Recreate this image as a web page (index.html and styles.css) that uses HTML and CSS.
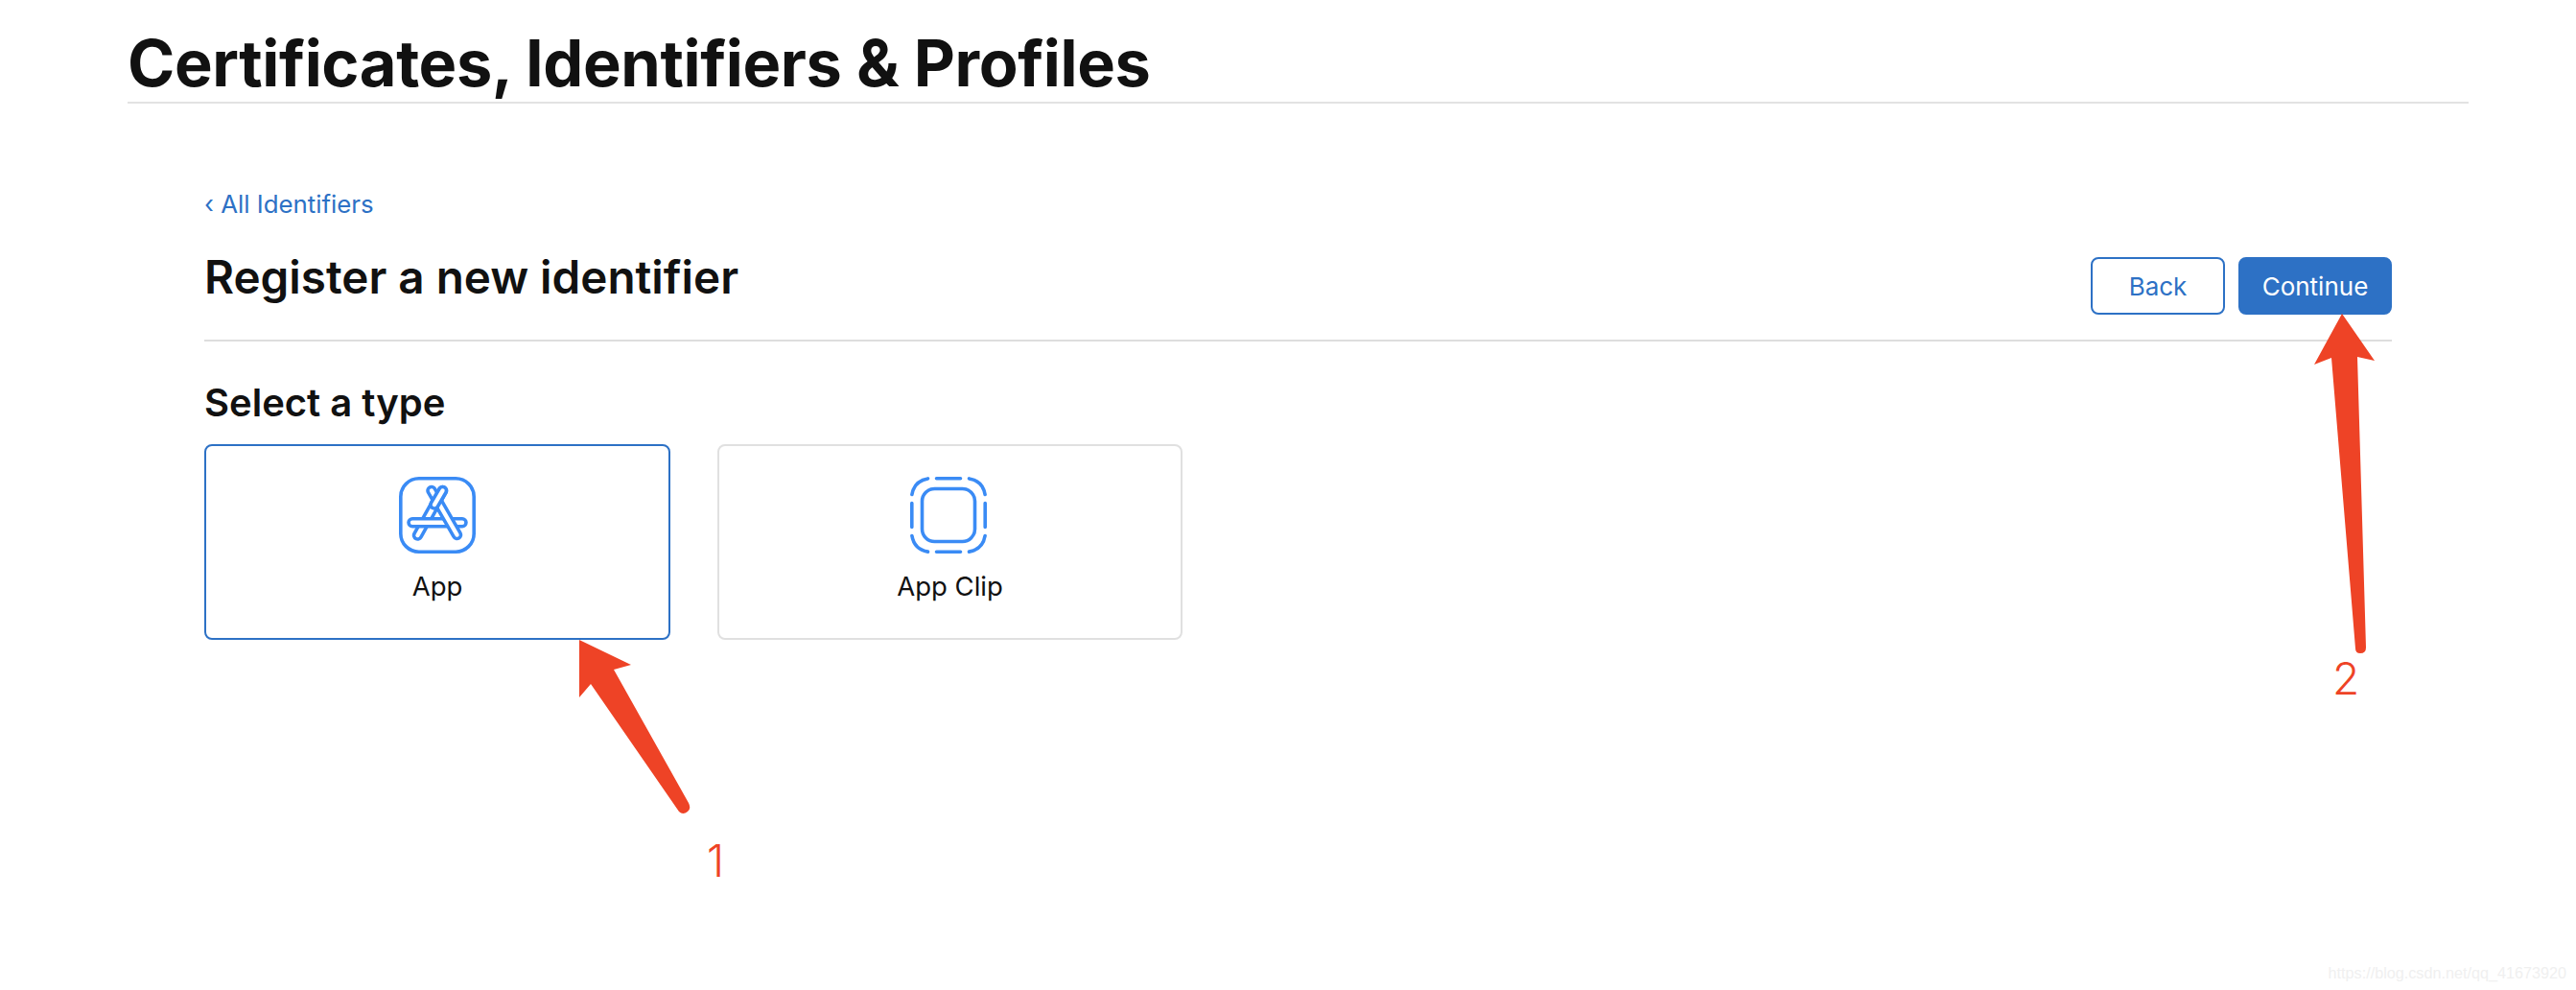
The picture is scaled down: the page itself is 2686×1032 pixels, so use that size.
FILE: index.html
```html
<!DOCTYPE html>
<html lang="en">
<head>
<meta charset="utf-8">
<title>Register a new identifier</title>
<link rel="stylesheet" href="styles.css">
</head>
<body>
<div class="page">
  <header class="top">
    <h1 class="title">Certificates, Identifiers &amp; Profiles</h1>
  </header>
  <main class="main">
    <a class="back-link" href="#">‹ All Identifiers</a>
    <div class="head-row">
      <h2 class="heading">Register a new identifier</h2>
      <div class="actions">
        <button class="btn btn-outline">Back</button>
        <button class="btn btn-solid">Continue</button>
      </div>
    </div>
    <h3 class="subheading">Select a type</h3>
    <div class="cards">
      <div class="card card-selected">
        <svg class="card-icon" viewBox="0 0 80 80" fill="none">
          <rect x="1.800" y="1.800" width="76.400" height="76.400" rx="19" class="ln"/>
          <g stroke-linecap="round">
            <path class="cap-o" d="M45.500 14.500 19.500 61"/><path class="cap-i" d="M45.500 14.500 19.500 61"/>
            <path class="cap-o" d="M14 47.700H66"/><path class="cap-i" d="M14 47.700H66"/>
            <path class="cap-o" d="M34 14.500 60.500 60.500"/><path class="cap-i" d="M34 14.500 60.500 60.500"/>
            <path class="cap-o" d="M45.500 14.500 37 29"/><path class="cap-i" d="M45.500 14.500 37 29"/>
          </g>
        </svg>
        <span class="card-label">App</span>
      </div>
      <div class="card">
        <svg class="card-icon card-icon-clip" viewBox="0 0 80 80" fill="none">
          <rect x="12.500" y="12.500" width="55" height="55" rx="13" class="ln"/>
          <g class="ln" stroke-linecap="round">
            <path d="M27.500 1.800H52.500M27.500 78.200H52.500M1.800 27.500V52.500M78.200 27.500V52.500"/>
            <path d="M18.500 1.900C9 3.500 3.500 9 1.900 18.500M61.500 1.900C71 3.500 76.500 9 78.100 18.500M18.500 78.100C9 76.500 3.500 71 1.900 61.500M61.500 78.100C71 76.500 76.500 71 78.100 61.500"/>
          </g>
        </svg>
        <span class="card-label">App Clip</span>
      </div>
    </div>
  </main>
</div>
<svg class="arrows" viewBox="0 0 2686 1032" width="2686" height="1032">
  <path class="arrow" d="M604 667 658 693 640 698 718 837Q721 843 717 846 712 850 708 846L616 713 604 727Z"/>
  <path class="arrow" d="M2442 327 2476 376 2458 372 2467 675Q2467 681 2461 681 2456 681 2456 676L2431 373 2413 380Z"/>
</svg>
<span class="note note-one">1</span>
<span class="note note-two">2</span>
<span class="watermark">https://blog.csdn.net/qq_41673920</span>
</body>
</html>
```
FILE: styles.css
```css
html, body { margin: 0; padding: 0; background: #fff; }
body { position: relative; width: 2686px; height: 1032px; overflow: hidden; font-family: Inter, "Liberation Sans", sans-serif; color: #111; }
.page { padding: 0 112px 0 133px; }
.top { height: 106px; border-bottom: 2px solid #e2e2e2; display: flex; align-items: flex-end; }
.title { margin: 0; font-size: 66.7px; line-height: 80px; font-weight: 700; letter-spacing: -0.4px; white-space: nowrap; }
.main { padding: 88px 80px 0 80px; }
.back-link { display: block; height: 36px; font-size: 25.800px; line-height: 34px; color: #2d71c5; text-decoration: none; }
.head-row { display: flex; justify-content: space-between; align-items: flex-start; height: 122px; border-bottom: 2px solid #ddd; }
.heading { margin: 28px 0 0; font-size: 47.600px; line-height: 58px; font-weight: 600; }
.actions { display: flex; gap: 14px; margin-top: 36px; }
.btn { box-sizing: border-box; height: 60px; border-radius: 8px; font: 400 26px Inter, "Liberation Sans", sans-serif; padding: 0; }
.btn-outline { width: 140px; background: #fff; color: #2d71c5; border: 2px solid #2d71c5; }
.btn-solid { width: 160px; background: #2d71c5; color: #fff; border: 2px solid #2d71c5; }
.subheading { margin: 41px 0 0; font-size: 40px; line-height: 46px; font-weight: 600; }
.cards { display: flex; gap: 49px; margin-top: 20px; }
.card { box-sizing: border-box; width: 485px; height: 204px; border: 2px solid #e0e0e0; border-radius: 8px; display: flex; flex-direction: column; align-items: center; padding-top: 32px; }
.card-selected { width: 486px; border-color: #2d71c5; }
.card-icon { width: 80px; height: 80px; display: block; }
.card-icon-clip { margin-right: 4px; }
.card-label { margin-top: 16px; font-size: 27.500px; line-height: 36px; font-weight: 400; }
.ln { stroke: #3a8bf5; stroke-width: 3.600; }
.cap-o { stroke: #3a8bf5; stroke-width: 11.500; }
.cap-i { stroke: #fff; stroke-width: 4.400; }
.arrows { position: absolute; left: 0; top: 0; pointer-events: none; }
.arrow { fill: #ee4326; }
.note { position: absolute; font-family: Inter, sans-serif; font-weight: 300; font-size: 46px; line-height: 56px; color: #ee4326; }
.note-one { left: 737px; top: 869px; }
.note-two { left: 2432px; top: 679px; }
.watermark { position: absolute; right: 10px; bottom: 6px; font-family: "Liberation Sans", sans-serif; font-size: 16.200px; line-height: 24px; color: #f0f0f0; }
```
